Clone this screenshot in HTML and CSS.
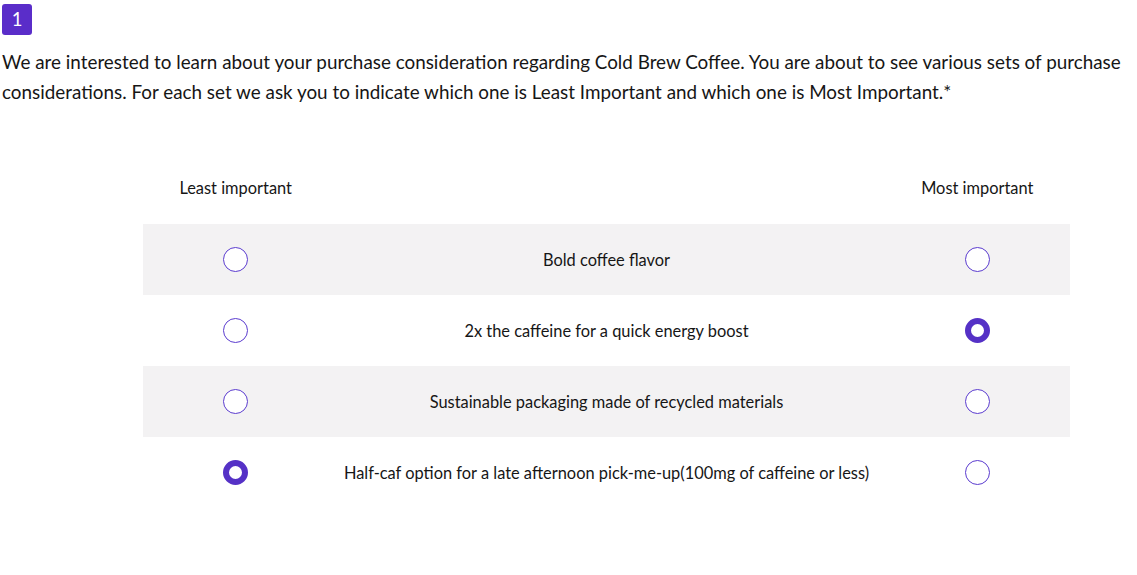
FILE: index.html
```html
<!DOCTYPE html>
<html lang="en">
<head>
<meta charset="utf-8">
<title>Survey question</title>
<link rel="stylesheet" href="styles.css">
</head>
<body>
<div class="question">
  <div class="badge">1</div>
  <p class="prompt">We are interested to learn about your purchase consideration regarding Cold Brew Coffee. You are about to see various sets of purchase considerations. For each set we ask you to indicate which one is Least Important and which one is Most Important.*</p>
  <div class="maxdiff">
    <div class="row head">
      <div class="cell">Least important</div>
      <div class="cell"></div>
      <div class="cell">Most important</div>
    </div>
    <div class="row shaded">
      <div class="cell"><span class="radio"></span></div>
      <div class="cell label">Bold coffee flavor</div>
      <div class="cell"><span class="radio"></span></div>
    </div>
    <div class="row">
      <div class="cell"><span class="radio"></span></div>
      <div class="cell label">2x the caffeine for a quick energy boost</div>
      <div class="cell"><span class="radio on"></span></div>
    </div>
    <div class="row shaded">
      <div class="cell"><span class="radio"></span></div>
      <div class="cell label">Sustainable packaging made of recycled materials</div>
      <div class="cell"><span class="radio"></span></div>
    </div>
    <div class="row">
      <div class="cell"><span class="radio on"></span></div>
      <div class="cell label">Half-caf option for a late afternoon pick-me-up(100mg of caffeine or less)</div>
      <div class="cell"><span class="radio"></span></div>
    </div>
  </div>
</div>
</body>
</html>
```
FILE: styles.css
```css
* { box-sizing: border-box; }
html, body { margin: 0; background: #ffffff; }
body {
  font-family: "Lato", "Open Sans", sans-serif;
  color: #161616;
  padding: 4px 0 0 2px;
}
.badge {
  width: 30px;
  height: 31px;
  border-radius: 3px;
  background: #5a2dc9;
  color: #ffffff;
  font-size: 18.5px;
  line-height: 31px;
  text-align: center;
}
.prompt {
  margin: 12px 0 0 0;
  font-size: 18.85px;
  line-height: 30px;
}
.maxdiff {
  margin: 69px 0 0 141px;
  width: 927px;
}
.row {
  display: grid;
  grid-template-columns: 20% 60% 20%;
  height: 71px;
  align-items: center;
}
.row.head {
  height: 48px;
  align-items: start;
  font-size: 16.4px;
  line-height: 24px;
}
.row.shaded { background: #f3f2f3; }
.cell {
  text-align: center;
  display: flex;
  justify-content: center;
  align-items: center;
}
.label { font-size: 16.4px; }
.radio {
  display: block;
  width: 25px;
  height: 25px;
  border-radius: 50%;
  border: 1.5px solid #5b3ccf;
  background: #ffffff;
}
.radio.on { border: 6.5px solid #5531c6; }
```
